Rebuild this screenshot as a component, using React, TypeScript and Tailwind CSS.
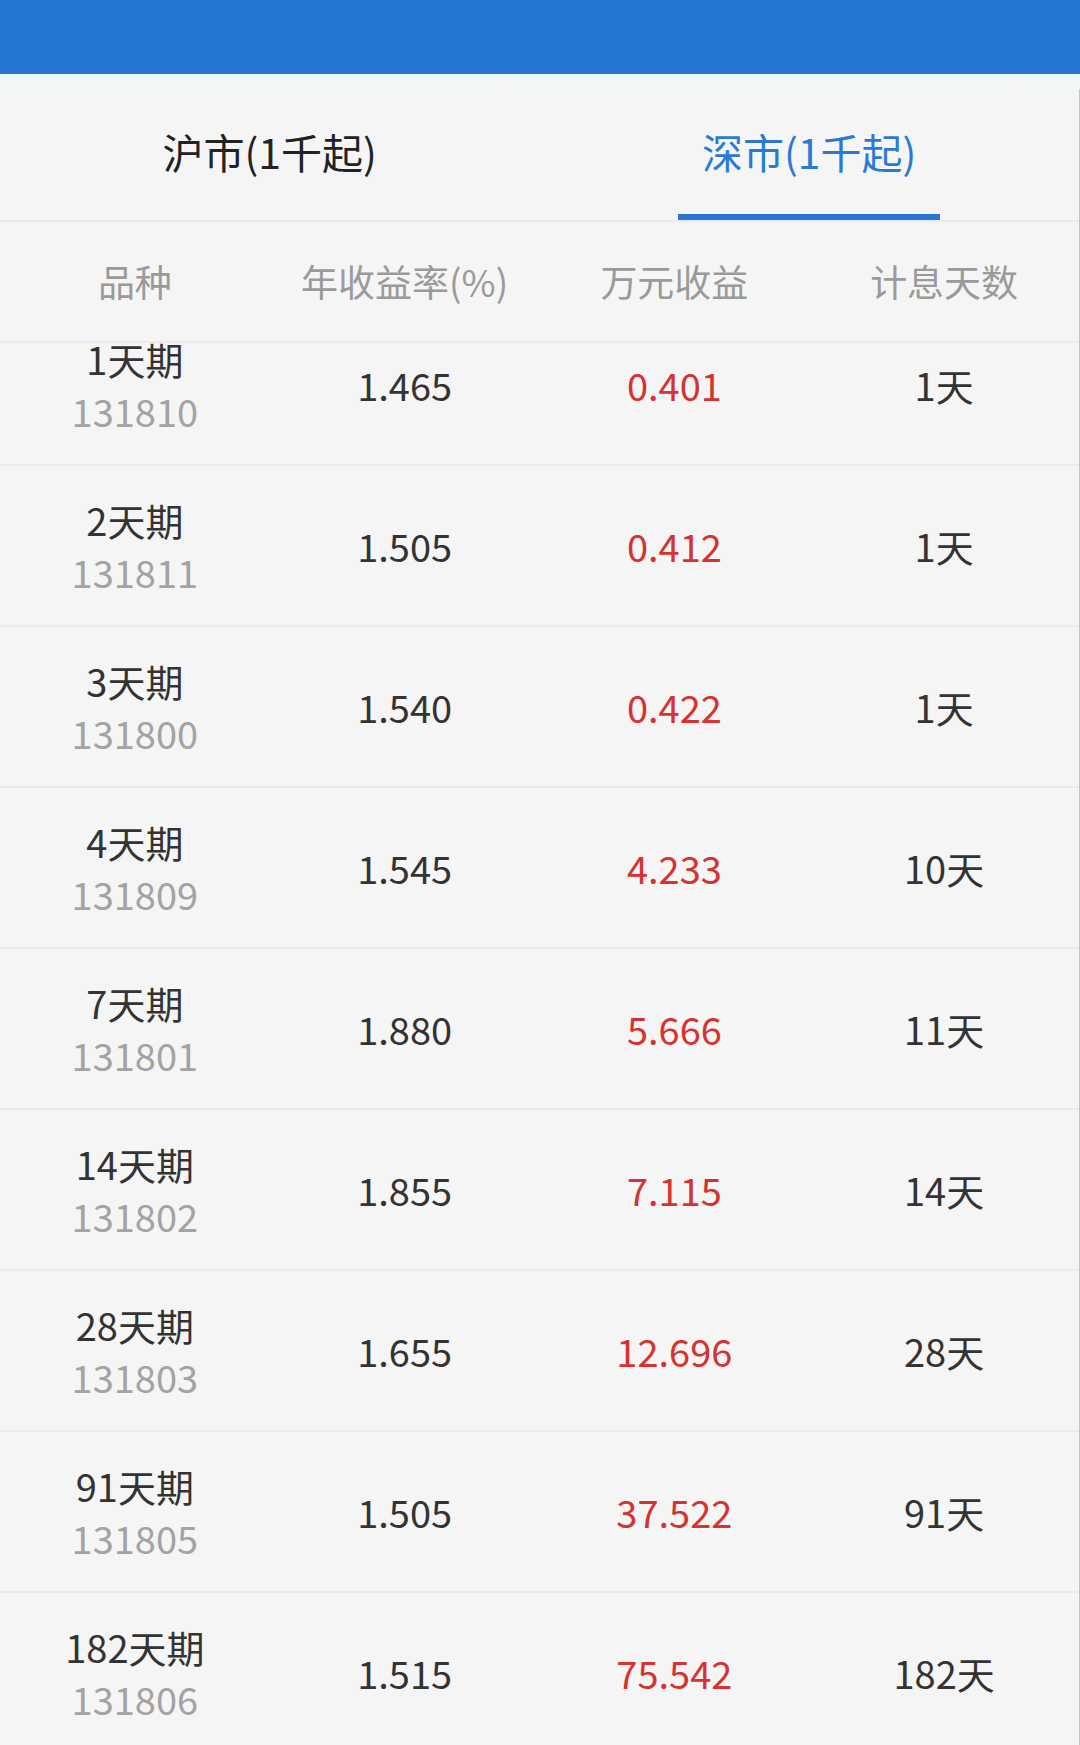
import React, { useState } from "react";

interface Product {
  name: string;
  code: string;
  rate: string;
  income: string;
  days: string;
}

const products: Product[] = [
  { name: "1天期", code: "131810", rate: "1.465", income: "0.401", days: "1天" },
  { name: "2天期", code: "131811", rate: "1.505", income: "0.412", days: "1天" },
  { name: "3天期", code: "131800", rate: "1.540", income: "0.422", days: "1天" },
  { name: "4天期", code: "131809", rate: "1.545", income: "4.233", days: "10天" },
  { name: "7天期", code: "131801", rate: "1.880", income: "5.666", days: "11天" },
  { name: "14天期", code: "131802", rate: "1.855", income: "7.115", days: "14天" },
  { name: "28天期", code: "131803", rate: "1.655", income: "12.696", days: "28天" },
  { name: "91天期", code: "131805", rate: "1.505", income: "37.522", days: "91天" },
  { name: "182天期", code: "131806", rate: "1.515", income: "75.542", days: "182天" },
];

const tabs = ["沪市(1千起)", "深市(1千起)"];
const columns = ["品种", "年收益率(%)", "万元收益", "计息天数"];

export default function App() {
  const [activeTab, setActiveTab] = useState(1);

  return (
    <div className="h-[1745px] overflow-hidden bg-[#f5f5f5] font-['Noto_Sans_CJK_SC','Noto_Sans',sans-serif]">
      {/* Top bar */}
      <div className="h-[74px] bg-[#2677d3]" />
      <div className="h-[15px] bg-gradient-to-b from-[#eef7fd] to-[#f5f5f5]" />

      <div className="border-r border-[#c4c4c4]">
        {/* Tabs */}
        <div className="flex h-[133px] border-b-2 border-[#ebebeb]">
          {tabs.map((tab, idx) => (
            <button
              key={tab}
              onClick={() => setActiveTab(idx)}
              className="flex flex-1 flex-col items-center"
            >
              <div
                className={`flex flex-1 items-center text-[41px] ${
                  activeTab === idx ? "text-[#2a7ad5]" : "text-[#222]"
                }`}
              >
                {tab}
              </div>
              <div
                className={`h-[6px] w-[262px] ${
                  activeTab === idx ? "bg-[#2677d3]" : "bg-transparent"
                }`}
              />
            </button>
          ))}
        </div>

        {/* Column header */}
        <div className="grid h-[121px] grid-cols-4 items-center border-b-2 border-[#ebebeb] text-[37px] text-[#9a9a9a]">
          {columns.map((col) => (
            <div key={col} className="text-center">
              {col}
            </div>
          ))}
        </div>

        {/* Rows (list scrolled a little) */}
        <div className="-mt-[38px]">
          {products.map((p) => (
            <div
              key={p.code}
              className="grid h-[161px] grid-cols-4 items-center border-b-2 border-[#ebebeb] text-[38px] text-[#333]"
            >
              <div className="flex flex-col items-center">
                <div className="leading-[52px]">{p.name}</div>
                <div className="leading-[52px] text-[#a3a3a3]">{p.code}</div>
              </div>
              <div className="text-center">{p.rate}</div>
              <div className="text-center text-[#d6322f]">{p.income}</div>
              <div className="text-center">{p.days}</div>
            </div>
          ))}
        </div>
      </div>
    </div>
  );
}
